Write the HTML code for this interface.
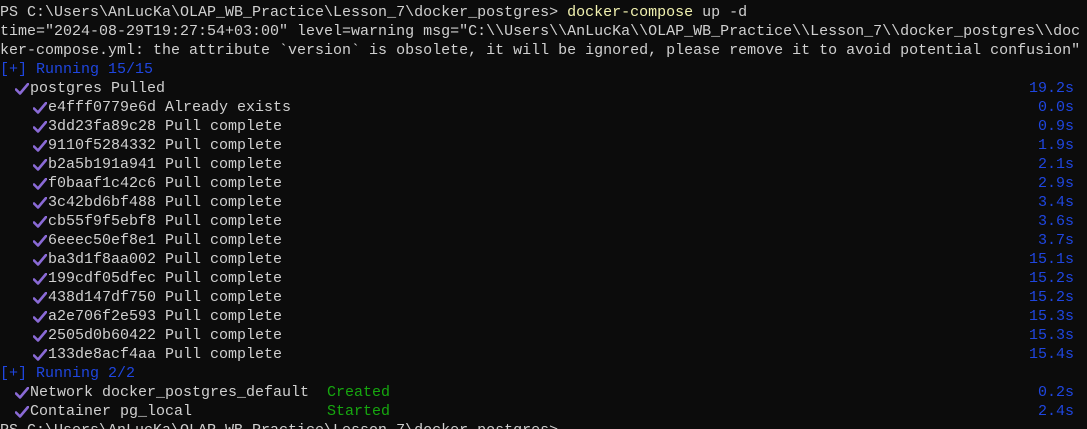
<!DOCTYPE html>
<html><head><meta charset="utf-8"><style>
html,body{margin:0;padding:0;background:#0c0c0c;width:1087px;height:429px;overflow:hidden;position:relative}
.t{position:absolute;left:0;height:19px;line-height:19px;font-family:"Liberation Mono","DejaVu Sans Mono",monospace;font-size:15px;color:#d0d0d0;white-space:pre;width:1087px;margin-top:3px}
.b{color:#1f46e0}.g{color:#16a80f}
.c{position:absolute;top:4px;width:14px;height:12px}
.r{position:absolute;right:13px;top:0;color:#1f46e0}
.w{color:#f2f2b0}
</style></head><body>
<svg width="0" height="0" style="position:absolute"><defs><symbol id="ck" viewBox="0 0 14 12"><path d="M1 6.5 L5 10.5 L13 1" fill="none" stroke="#8a6ad6" stroke-width="2.6" stroke-linecap="round" stroke-linejoin="round"/></symbol></defs></svg>
<div class="t" style="top:0">PS C:\Users\AnLucKa\OLAP_WB_Practice\Lesson_7\docker_postgres&gt; <span class="w">docker-compose</span> up -d</div>
<div class="t" style="top:19px">time="2024-08-29T19:27:54+03:00" level=warning msg="C:\\Users\\AnLucKa\\OLAP_WB_Practice\\Lesson_7\\docker_postgres\\doc</div>
<div class="t" style="top:38px">ker-compose.yml: the attribute `version` is obsolete, it will be ignored, please remove it to avoid potential confusion"</div>
<div class="t b" style="top:57px">[+] Running 15/15</div>
<div class="t" style="top:76px"><svg class="c" style="left:15px"><use href="#ck"/></svg><span style="position:absolute;left:30px">postgres Pulled</span><span class="r">19.2s</span></div>
<div class="t" style="top:95px"><svg class="c" style="left:33px"><use href="#ck"/></svg><span style="position:absolute;left:48px">e4fff0779e6d Already exists</span><span class="r">0.0s</span></div>
<div class="t" style="top:114px"><svg class="c" style="left:33px"><use href="#ck"/></svg><span style="position:absolute;left:48px">3dd23fa89c28 Pull complete</span><span class="r">0.9s</span></div>
<div class="t" style="top:133px"><svg class="c" style="left:33px"><use href="#ck"/></svg><span style="position:absolute;left:48px">9110f5284332 Pull complete</span><span class="r">1.9s</span></div>
<div class="t" style="top:152px"><svg class="c" style="left:33px"><use href="#ck"/></svg><span style="position:absolute;left:48px">b2a5b191a941 Pull complete</span><span class="r">2.1s</span></div>
<div class="t" style="top:171px"><svg class="c" style="left:33px"><use href="#ck"/></svg><span style="position:absolute;left:48px">f0baaf1c42c6 Pull complete</span><span class="r">2.9s</span></div>
<div class="t" style="top:190px"><svg class="c" style="left:33px"><use href="#ck"/></svg><span style="position:absolute;left:48px">3c42bd6bf488 Pull complete</span><span class="r">3.4s</span></div>
<div class="t" style="top:209px"><svg class="c" style="left:33px"><use href="#ck"/></svg><span style="position:absolute;left:48px">cb55f9f5ebf8 Pull complete</span><span class="r">3.6s</span></div>
<div class="t" style="top:228px"><svg class="c" style="left:33px"><use href="#ck"/></svg><span style="position:absolute;left:48px">6eeec50ef8e1 Pull complete</span><span class="r">3.7s</span></div>
<div class="t" style="top:247px"><svg class="c" style="left:33px"><use href="#ck"/></svg><span style="position:absolute;left:48px">ba3d1f8aa002 Pull complete</span><span class="r">15.1s</span></div>
<div class="t" style="top:266px"><svg class="c" style="left:33px"><use href="#ck"/></svg><span style="position:absolute;left:48px">199cdf05dfec Pull complete</span><span class="r">15.2s</span></div>
<div class="t" style="top:285px"><svg class="c" style="left:33px"><use href="#ck"/></svg><span style="position:absolute;left:48px">438d147df750 Pull complete</span><span class="r">15.2s</span></div>
<div class="t" style="top:304px"><svg class="c" style="left:33px"><use href="#ck"/></svg><span style="position:absolute;left:48px">a2e706f2e593 Pull complete</span><span class="r">15.3s</span></div>
<div class="t" style="top:323px"><svg class="c" style="left:33px"><use href="#ck"/></svg><span style="position:absolute;left:48px">2505d0b60422 Pull complete</span><span class="r">15.3s</span></div>
<div class="t" style="top:342px"><svg class="c" style="left:33px"><use href="#ck"/></svg><span style="position:absolute;left:48px">133de8acf4aa Pull complete</span><span class="r">15.4s</span></div>
<div class="t b" style="top:361px">[+] Running 2/2</div>
<div class="t" style="top:380px"><svg class="c" style="left:15px"><use href="#ck"/></svg><span style="position:absolute;left:30px">Network docker_postgres_default</span><span class="g" style="position:absolute;left:327px">Created</span><span class="r">0.2s</span></div>
<div class="t" style="top:399px"><svg class="c" style="left:15px"><use href="#ck"/></svg><span style="position:absolute;left:30px">Container pg_local</span><span class="g" style="position:absolute;left:327px">Started</span><span class="r">2.4s</span></div>
<div class="t" style="top:418px">PS C:\Users\AnLucKa\OLAP_WB_Practice\Lesson_7\docker_postgres&gt;</div>
</body></html>
